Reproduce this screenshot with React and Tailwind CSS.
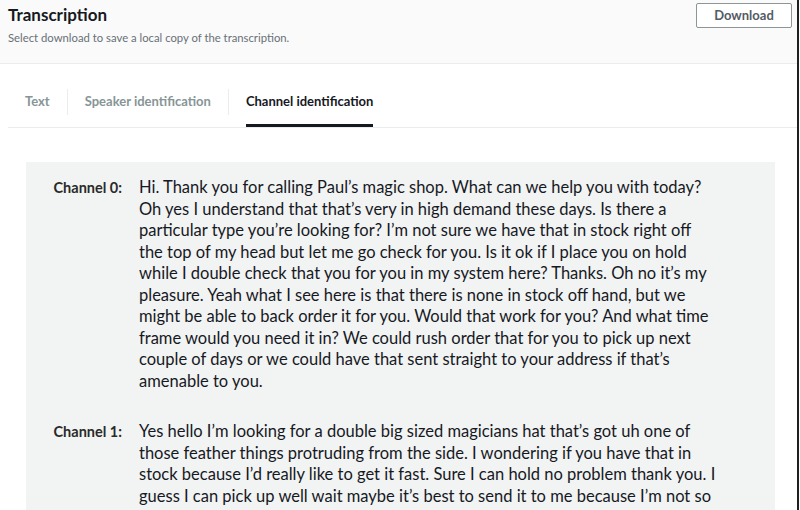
const channels = [
  {
    label: "Channel 0:",
    lines: [
      "Hi. Thank you for calling Paul’s magic shop. What can we help you with today?",
      "Oh yes I understand that that’s very in high demand these days. Is there a",
      "particular type you’re looking for? I’m not sure we have that in stock right off",
      "the top of my head but let me go check for you. Is it ok if I place you on hold",
      "while I double check that you for you in my system here? Thanks. Oh no it’s my",
      "pleasure. Yeah what I see here is that there is none in stock off hand, but we",
      "might be able to back order it for you. Would that work for you? And what time",
      "frame would you need it in? We could rush order that for you to pick up next",
      "couple of days or we could have that sent straight to your address if that’s",
      "amenable to you.",
    ],
  },
  {
    label: "Channel 1:",
    lines: [
      "Yes hello I’m looking for a double big sized magicians hat that’s got uh one of",
      "those feather things protruding from the side. I wondering if you have that in",
      "stock because I’d really like to get it fast. Sure I can hold no problem thank you. I",
      "guess I can pick up well wait maybe it’s best to send it to me because I’m not so",
    ],
  },
];

const ui = { fontFamily: "Lato, 'Open Sans', sans-serif" };
const body = { fontFamily: "Lato, 'Liberation Sans', sans-serif" };

const Tab = ({ label, active }) => (
  <div className="flex h-full items-center px-[17px]">
    <span
      className={`relative text-[13px] font-bold ${active ? "text-[#16191f]" : "text-[#879596]"}`}
    >
      {label}
      {active && <span className="absolute left-0 right-0 top-[32px] h-[3px] bg-[#16191f]"></span>}
    </span>
  </div>
);

const Sep = () => <div className="w-px h-[26px] bg-[#eaeded]"></div>;

export default function App() {
  return (
    <div className="w-[799px] h-[510px] overflow-hidden bg-white border-r-2 border-[#1f1f1f] flex flex-col" style={ui}>
      <div className="h-[64px] shrink-0 bg-[#fafafa] border-b border-[#eaeded] flex justify-between items-start pl-[8px] pr-[5px]">
        <div className="pt-[4px]">
          <div className="text-[17px] font-bold text-[#16191f] leading-[22px]">Transcription</div>
          <div className="text-[11.3px] text-[#687078] mt-[4px]">Select download to save a local copy of the transcription.</div>
        </div>
        <button className="mt-[3px] w-[96px] h-[25px] border border-[#8d9696] rounded-[2px] bg-white text-[13px] font-bold text-[#545b64]">
          Download
        </button>
      </div>

      <div className="ml-[8px] h-[64px] shrink-0 border-b border-[#eaeded] flex items-center pt-[13px]">
        <Tab label="Text" />
        <Sep />
        <Tab label="Speaker identification" />
        <Sep />
        <Tab label="Channel identification" active />
      </div>

      <div className="mt-[34px] ml-[26px] mr-[22px] flex-1 bg-[#f2f3f3] pt-[15px]">
        {channels.map((c) => (
          <div key={c.label} className="flex mb-[29px]">
            <div className="w-[96px] shrink-0 text-right text-[14.5px] font-bold text-[#2a2a2a] leading-[21.5px]" style={ui}>
              {c.label}
            </div>
            <div className="ml-[17px] text-[16.5px] text-[#16191f] leading-[21.5px]" style={body}>
              {c.lines.map((l, i) => (
                <div key={i} className="whitespace-nowrap">{l}</div>
              ))}
            </div>
          </div>
        ))}
      </div>
    </div>
  );
}
